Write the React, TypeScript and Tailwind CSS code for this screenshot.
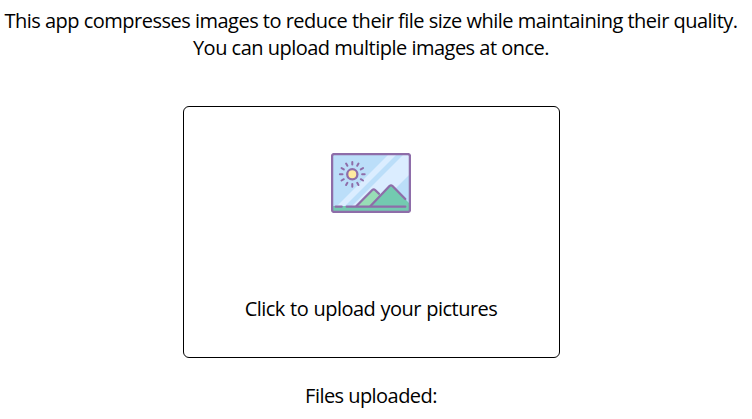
const RAYS = [0, 30, 60, 90, 120, 150, 180, 210, 240, 270, 300, 330];

function PictureIcon() {
  return (
    <svg width="80" height="60" viewBox="0 0 80 60" fill="none" aria-hidden="true">
      <rect x="1" y="1" width="78" height="58" rx="1.5" fill="#bbdef9" />
      <path d="M58 1 H66 L13 54 H5 Z" fill="#dbedff" />
      <path d="M73 1 H79 V21 L46 54 H20 Z" fill="#dbedff" />
      <path d="M26 53.5 L41.5 37 Q42.7 36 43.9 37 L52 45 V54 Z" fill="#98ddb6" />
      <path d="M40 53.5 L58.5 33.3 Q60 32 61.5 33.3 L79 51 V54 H40 Z" fill="#73cab0" />
      <rect x="1" y="53" width="78" height="6" fill="#73cab0" />
      <g stroke="#8e6da9" strokeWidth="2.3" strokeLinecap="round" strokeLinejoin="round">
        <path d="M25.5 53 L41.3 37 Q42.7 35.7 44.1 37 L48 40.8" />
        <path d="M39.5 53 L58.5 33 Q60 31.7 61.5 33 L74.3 46" />
        <path d="M15.7 53.7 H74.3 M4.7 53.7 H10.7" />
        <circle cx="21.3" cy="21.3" r="5.1" fill="#ffeaa0" />
        {RAYS.map((angle) => (
          <path key={angle} d="M21.3 11.5 V8.9" strokeWidth="2" transform={`rotate(${angle} 21.3 21.3)`} />
        ))}
        <rect x="1.1" y="1.1" width="77.8" height="57.8" rx="2" />
      </g>
    </svg>
  );
}

export default function App() {
  return (
    <main className="flex h-[419px] w-[742px] flex-col items-center bg-white font-['Open_Sans',sans-serif] text-[20px] leading-[27px] tracking-[-0.51px] text-black">
      <header className="flex flex-col items-center pt-[7px] whitespace-nowrap">
        <p>This app compresses images to reduce their file size while maintaining their quality.</p>
        <p>You can upload multiple images at once.</p>
      </header>
      <button
        type="button"
        className="mt-[45px] flex h-[252px] w-[377px] shrink-0 flex-col items-center rounded-[6px] border border-black pt-[46px]"
      >
        <PictureIcon />
        <span className="mt-[82px] tracking-[-0.52px] [word-spacing:0.6px]">Click to upload your pictures</span>
      </button>
      <p className="mt-[24px] tracking-[-0.55px]">Files uploaded:</p>
    </main>
  );
}
